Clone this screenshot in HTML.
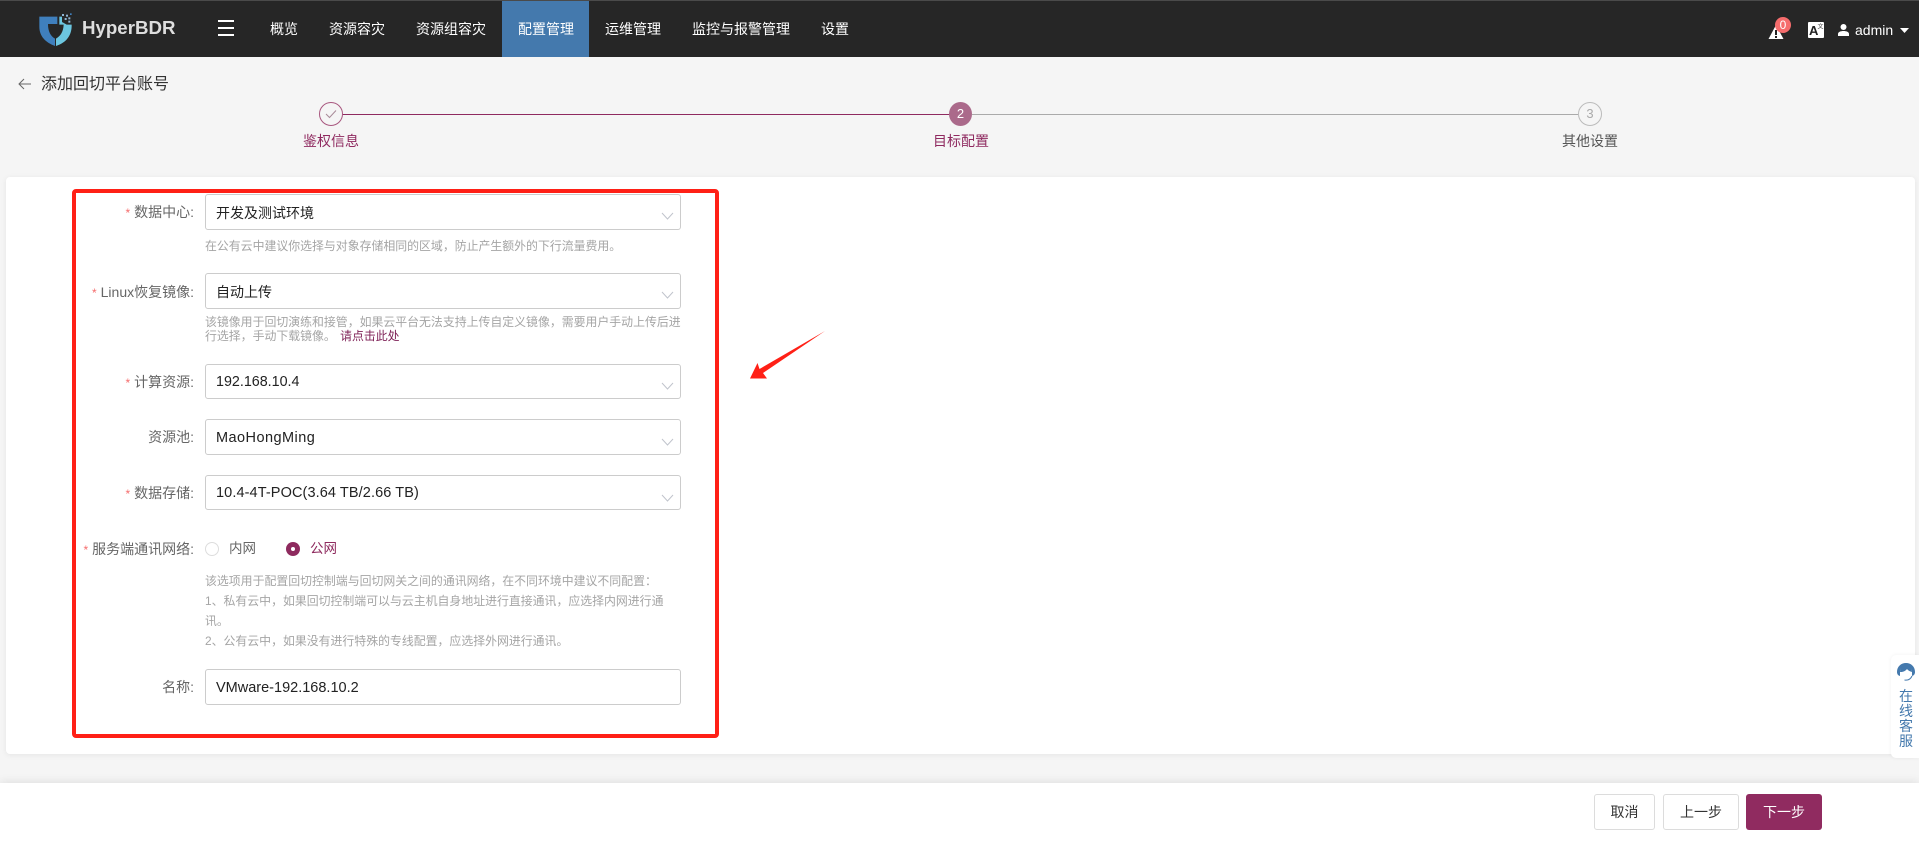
<!DOCTYPE html>
<html lang="zh">
<head>
<meta charset="utf-8">
<title>HyperBDR</title>
<style>
html,body{margin:0;padding:0;width:1919px;height:841px;overflow:hidden;background:#f5f5f5}
body{position:relative;font-family:"Liberation Sans","Noto Sans CJK SC",sans-serif;font-size:14px;color:#333}
.a{position:absolute;white-space:nowrap}
.nav{top:1px;height:56px;line-height:56px;color:#fff;font-size:14px}
.sel{position:absolute;left:205px;width:474px;background:#fff;border:1px solid #ccc;border-radius:3px;color:#222}
.sel span{position:absolute;left:10px;top:0;bottom:0;white-space:nowrap}
.sel span.l{font-size:14.5px}
.lab{position:absolute;right:1725px;height:20px;line-height:20px;color:#666;white-space:nowrap}
.lab i{font-style:normal;color:#f56c6c;font-size:12px;margin-right:4px}
.hint{position:absolute;left:205px;font-size:11.9px;color:#a5a5a5;white-space:nowrap}
.stepl{position:absolute;top:131px;width:120px;text-align:center;height:20px;line-height:20px}
.btn{position:absolute;top:794px;height:34px;line-height:34px;border:1px solid #dcdcdc;border-radius:3px;background:#fff;text-align:center;color:#333}
.cs{position:absolute;left:1898px;width:16px;text-align:center;font-size:14px;line-height:15px;color:#4479ad}
</style>
</head>
<body>
<!-- header -->
<div class="a" style="left:0;top:0;width:1919px;height:57px;background:#262626"></div>
<div class="a" style="left:0;top:0;width:1919px;height:1px;background:#4a4a4a"></div>
<svg class="a" style="left:20px;top:0" width="220" height="60" viewBox="0 0 660 180">
  <path d="M58 50H112V72H84C84 95 92 108 105 116V138C78 128 58 110 58 80Z" fill="#3f7fbd"/>
  <path d="M118 50H126V66L140 74H155C156 105 140 128 108 138V116C122 108 130 95 131 74H118Z" fill="#6cc6e0"/>
  <g fill="#8fb4d2">
    <rect x="126" y="42" width="6" height="6"/><rect x="138" y="44" width="6" height="6"/>
    <rect x="134" y="54" width="6" height="6"/><rect x="145" y="52" width="6" height="6"/>
    <rect x="145" y="62" width="6" height="6"/><rect x="150" y="40" width="5" height="5" fill="#3f7fbd"/>
  </g>
</svg>
<div class="a" style="left:82px;top:14px;height:28px;line-height:28px;font-size:18.7px;font-weight:bold;color:#dedede">HyperBDR</div>
<div class="a" style="left:218px;top:20px;width:16px;height:2px;background:#fff"></div>
<div class="a" style="left:218px;top:27px;width:16px;height:2px;background:#fff"></div>
<div class="a" style="left:218px;top:34px;width:16px;height:2px;background:#fff"></div>
<div class="a nav" style="left:270px">概览</div>
<div class="a nav" style="left:329px">资源容灾</div>
<div class="a nav" style="left:416px">资源组容灾</div>
<div class="a" style="left:502px;top:1px;width:87px;height:56px;background:#4479ad"></div>
<div class="a nav" style="left:518px">配置管理</div>
<div class="a nav" style="left:605px">运维管理</div>
<div class="a nav" style="left:692px">监控与报警管理</div>
<div class="a nav" style="left:821px">设置</div>
<!-- header right -->
<svg class="a" style="left:1768px;top:24px" width="16" height="16" viewBox="0 0 16 16">
  <path d="M8 1L15.5 15H.5Z" fill="#fff"/><rect x="7" y="6" width="2" height="5" fill="#222"/><rect x="7" y="12" width="2" height="2" fill="#222"/>
</svg>
<div class="a" style="left:1775px;top:17px;width:16px;height:16px;border-radius:8px;background:#f56c6c;color:#fff;font-size:12px;line-height:16px;text-align:center">0</div>
<svg class="a" style="left:1808px;top:22px" width="16" height="16" viewBox="0 0 16 16">
  <rect width="16" height="16" rx="1" fill="#fff"/>
  <text x="1" y="13" font-family="Liberation Sans" font-weight="bold" font-size="13" fill="#222">A</text>
  <text x="9.5" y="6.5" font-family="Noto Sans CJK SC" font-size="6" fill="#444">文</text>
</svg>
<svg class="a" style="left:1838px;top:24px" width="11" height="12" viewBox="0 0 11 12">
  <circle cx="5.5" cy="3" r="3" fill="#fff"/><path d="M0 12V10C0 8 2.5 7 5.5 7S11 8 11 10V12Z" fill="#fff"/>
</svg>
<div class="a" style="left:1855px;top:20px;height:20px;line-height:20px;color:#fff">admin</div>
<svg class="a" style="left:1900px;top:28px" width="9" height="5" viewBox="0 0 9 5"><path d="M0 0H9L4.5 5Z" fill="#fff"/></svg>

<!-- title -->
<svg class="a" style="left:18px;top:78px" width="14" height="12" viewBox="0 0 14 12"><path d="M13 6H1M6 1L1 6L6 11" fill="none" stroke="#666" stroke-width="1"/></svg>
<div class="a" style="left:41px;top:73px;height:24px;line-height:24px;font-size:16px;color:#333">添加回切平台账号</div>

<!-- steps -->
<div class="a" style="left:342px;top:114px;width:608px;height:1px;background:#8f2a60"></div>
<div class="a" style="left:972px;top:114px;width:606px;height:1px;background:#aaa"></div>
<div class="a" style="left:319px;top:102px;width:22px;height:22px;border:1px solid #a8577f;border-radius:50%;background:#f5f5f5"></div>
<svg class="a" style="left:325px;top:109px" width="12" height="10" viewBox="0 0 12 10"><path d="M1 5L4.5 8.5L11 1.5" fill="none" stroke="#a88a98" stroke-width="1"/></svg>
<div class="a" style="left:949px;top:102px;width:23px;height:24px;border-radius:50%;background:#ab6a8b;color:#fff;font-size:13px;line-height:24px;text-align:center">2</div>
<div class="a" style="left:1578px;top:102px;width:22px;height:22px;border:1px solid #bbb;border-radius:50%;background:#f5f5f5;color:#aaa;font-size:13px;line-height:22px;text-align:center">3</div>
<div class="stepl" style="left:271px;color:#8f2a60">鉴权信息</div>
<div class="stepl" style="left:901px;color:#8f2a60">目标配置</div>
<div class="stepl" style="left:1530px;color:#555">其他设置</div>

<!-- card -->
<div class="a" style="left:6px;top:177px;width:1909px;height:577px;background:#fff;border-radius:4px;box-shadow:0 1px 6px rgba(0,0,0,.07)"></div>

<!-- form -->
<div class="lab" style="top:202px"><i>*</i>数据中心:</div>
<div class="sel" style="top:194px;height:34px"><span style="line-height:36px">开发及测试环境</span></div>
<div class="hint" style="top:238px;line-height:16px">在公有云中建议你选择与对象存储相同的区域&#65292;防止产生额外的下行流量费用。</div>

<div class="lab" style="top:282px"><i>*</i>Linux恢复镜像:</div>
<div class="sel" style="top:273px;height:34px"><span style="line-height:36px">自动上传</span></div>
<div class="hint" style="top:315px;line-height:14px">该镜像用于回切演练和接管&#65292;如果云平台无法支持上传自定义镜像&#65292;需要用户手动上传后进</div>
<div class="hint" style="top:329px;line-height:14px">行选择&#65292;手动下载镜像。 <span style="color:#7d1f55;margin-left:1px">请点击此处</span></div>

<div class="lab" style="top:372px"><i>*</i>计算资源:</div>
<div class="sel" style="top:364px;height:33px"><span class="l" style="line-height:35px;font-size:14.3px">192.168.10.4</span></div>

<div class="lab" style="top:427px">资源池:</div>
<div class="sel" style="top:419px;height:34px"><span class="l" style="line-height:36px;letter-spacing:.45px">MaoHongMing</span></div>

<div class="lab" style="top:483px"><i>*</i>数据存储:</div>
<div class="sel" style="top:475px;height:33px"><span class="l" style="line-height:35px;letter-spacing:.1px">10.4-4T-POC(3.64 TB/2.66 TB)</span></div>

<div class="lab" style="top:539px"><i>*</i>服务端通讯网络:</div>
<div class="a" style="left:205px;top:542px;width:12px;height:12px;border:1px solid #ddd;border-radius:50%;background:#fff"></div>
<div class="a" style="left:229px;top:539px;height:20px;line-height:20px;color:#666;font-size:13.5px">内网</div>
<div class="a" style="left:286px;top:542px;width:14px;height:14px;border-radius:50%;background:#8e2a5e"></div>
<div class="a" style="left:291px;top:547px;width:4px;height:4px;border-radius:50%;background:#fff"></div>
<div class="a" style="left:310px;top:539px;height:20px;line-height:20px;color:#8e2a5e;font-size:13.5px">公网</div>

<div class="hint" style="top:571px;line-height:20px">该选项用于配置回切控制端与回切网关之间的通讯网络&#65292;在不同环境中建议不同配置&#65306;</div>
<div class="hint" style="top:591px;line-height:20px">1、私有云中&#65292;如果回切控制端可以与云主机自身地址进行直接通讯&#65292;应选择内网进行通</div>
<div class="hint" style="top:611px;line-height:20px">讯。</div>
<div class="hint" style="top:631px;line-height:20px">2、公有云中&#65292;如果没有进行特殊的专线配置&#65292;应选择外网进行通讯。</div>

<div class="lab" style="top:677px">名称:</div>
<div class="sel" style="top:669px;height:34px"><span class="l" style="line-height:36px">VMware-192.168.10.2</span></div>

<!-- chevrons -->
<svg class="a" style="left:0;top:0;pointer-events:none" width="1919" height="841" viewBox="0 0 1919 841">
  <g fill="none" stroke="#c0c4cc" stroke-width="1">
    <path d="M662 213L667.5 219L673 213"/>
    <path d="M662 292L667.5 298L673 292"/>
    <path d="M662 383L667.5 389L673 383"/>
    <path d="M662 439L667.5 445L673 439"/>
    <path d="M662 495L667.5 501L673 495"/>
  </g>
  <!-- hand-drawn red annotation arrow -->
  <path d="M750 378.5L757.5 363L759.5 369L825 331L763 373L767 378.5Z" fill="#ff2016"/>
</svg>

<!-- red annotation box -->
<div class="a" style="left:72px;top:189px;width:639px;height:541px;border:4px solid #ff2016;border-radius:4px"></div>

<!-- footer -->
<div class="a" style="left:0;top:783px;width:1919px;height:58px;background:#fff;box-shadow:0 -2px 8px rgba(0,0,0,.08)"></div>
<div class="btn" style="left:1594px;width:59px">取消</div>
<div class="btn" style="left:1663px;width:74px">上一步</div>
<div class="btn" style="left:1746px;width:76px;height:36px;line-height:36px;border:0;background:#902b60;color:#fff;border-radius:3px">下一步</div>

<!-- online service -->
<div class="a" style="left:1891px;top:655px;width:28px;height:103px;background:#fff;border-radius:5px 0 0 5px;box-shadow:0 0 4px rgba(0,0,0,.06)"></div>
<svg class="a" style="left:1896px;top:662px" width="20" height="20" viewBox="0 0 20 20">
  <path d="M1 10C1 4.5 5 1 10 1S19 4.5 19 10C19 12 18 13.5 16 14V10C16 6.5 13.5 4.5 10 4.5S4 6.5 4 10V14C2 13.5 1 12 1 10Z" fill="#4479ad"/>
  <path d="M4 10C4 6 7 3.5 10 3.5S16 6 16 10C14 9.5 12 8.5 11 7C9.5 9 7 10 4 10Z" fill="#4479ad"/>
  <path d="M5 10.5C7 10.5 9.5 9.5 11 7.8C12 9 14 10 15 10.5C15 14 13 16 10 16S5 14 5 10.5Z" fill="#fff"/>
  <path d="M8.5 18C11.5 18.5 14.5 17.5 16 14" fill="none" stroke="#4479ad" stroke-width="1"/>
</svg>
<div class="cs" style="top:689px">在</div>
<div class="cs" style="top:704px">线</div>
<div class="cs" style="top:719px">客</div>
<div class="cs" style="top:734px">服</div>
</body>
</html>
